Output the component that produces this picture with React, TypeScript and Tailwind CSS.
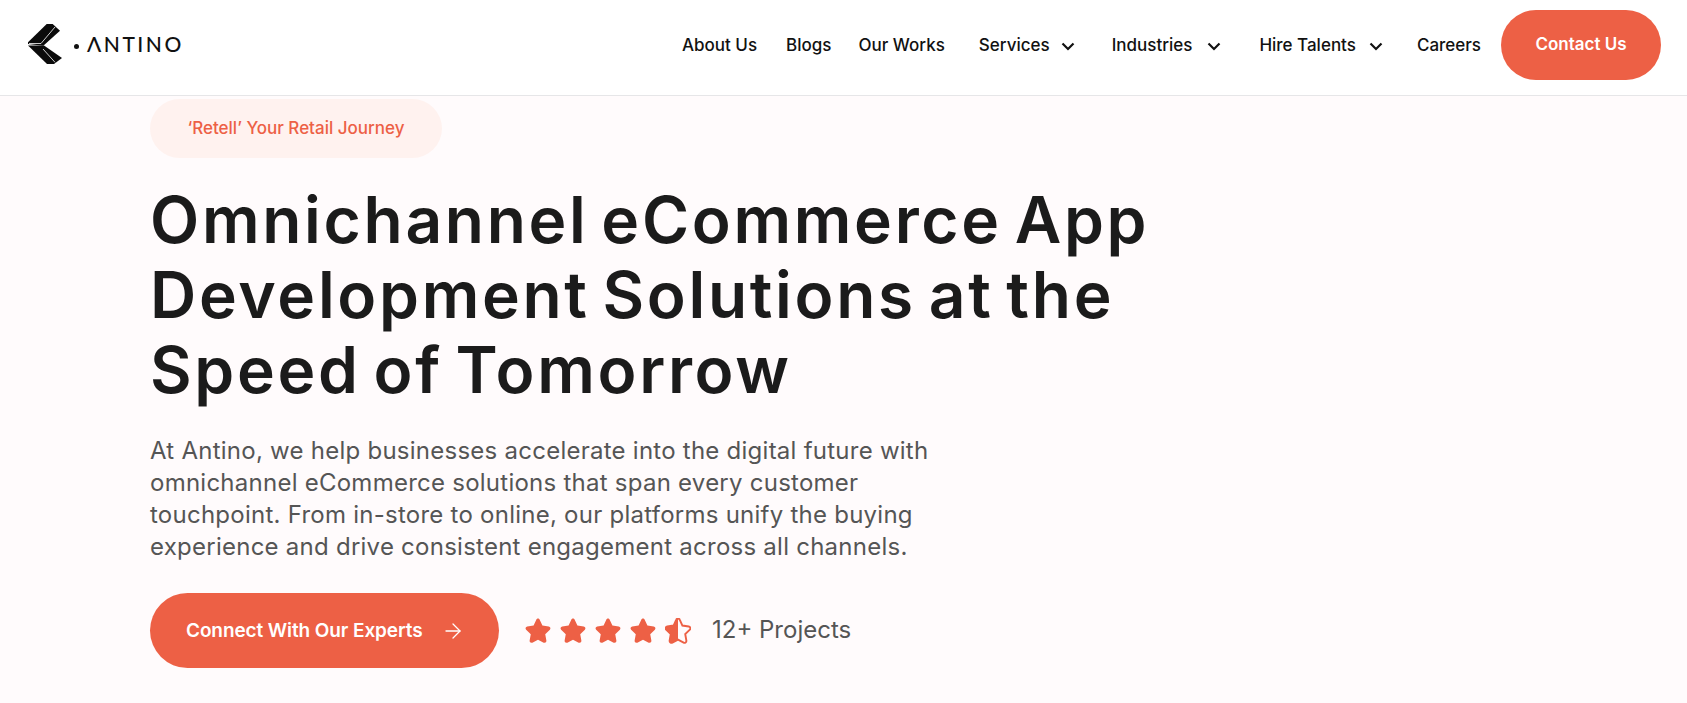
import React from "react";
import { ArrowRight } from "lucide-react";

const Star = ({ half = false }: { half?: boolean }) => (
  <svg width="26" height="26" viewBox="1 1 22 23" className="block">
    <path
      d="M12 1.500c.8 0 1.300.5 1.600 1.200l2.300 5 5.600.8c1.400.2 2 1.800 1 2.800l-4.100 4 1 5.700c.2 1.500-1.200 2.400-2.400 1.800L12 20.200l-5 2.600c-1.200.6-2.600-.3-2.400-1.800l1-5.700-4.100-4c-1-1-.4-2.600 1-2.800l5.600-.8 2.300-5c.3-.7.800-1.200 1.600-1.200z"
      fill={half ? "none" : "#ED6045"}
      stroke="#ED6045"
      strokeWidth={half ? 1.700 : 0}
    />
    {half && <path d="M12 1.500v18.700l-5 2.600c-1.200.6-2.600-.3-2.400-1.800l1-5.700-4.100-4c-1-1-.4-2.600 1-2.800l5.600-.8 2.300-5c.3-.7.800-1.200 1.600-1.200z" fill="#ED6045" />}
  </svg>
);

const Caret = ({ className }: { className: string }) => (
  <svg width="14" height="9" viewBox="0 0 14 9" className={className}>
    <path d="M1.500 1.500 L7 7 L12.500 1.500" fill="none" stroke="#111111" strokeWidth="2.200" />
  </svg>
);

const NavItem = ({ label, caret, className = "" }: { label: string; caret?: string; className?: string }) => (
  <a className={`mt-[3px] flex items-center text-[17px] font-medium text-[#111111] ${className}`}>
    {label}
    {caret && <Caret className={caret} />}
  </a>
);

export default function App() {
  return (
    <div className="min-h-[703px] bg-[#FFFBFC] font-['Inter',sans-serif]">
      <header className="flex h-[96px] items-center justify-between border-b border-[#E6E6E8] bg-white pb-[6px] pl-[28px] pr-[26px]">
        <div className="flex items-center">
          <svg width="35" height="41" viewBox="0 0 35 41">
            <polygon points="0,18.300 18.700,0 24.700,0 32,6.700 15.300,21.700 0,20" fill="#0b0b0b" />
            <polygon points="0,21.500 16,21.500 34,34 26,40 19,40" fill="#0b0b0b" />
            <path d="M1 19.500 L13 19.500 L27 3" stroke="#ffffff" strokeWidth="0.800" fill="none" />
            <path d="M15 25 L27 38.300" stroke="#ffffff" strokeWidth="0.800" fill="none" />
          </svg>
          <span className="ml-[11px] mt-[3px] h-[5px] w-[5px] rounded-full bg-[#111111]" />
          <span className="ml-[8px] -mt-[2px] font-['Lato',sans-serif] text-[21px] font-medium leading-none tracking-[0.12em] text-[#111111]">ΛNTINO</span>
        </div>
        <nav className="flex items-center">
          <NavItem label="About Us" />
          <NavItem label="Blogs" className="ml-[29px]" />
          <NavItem label="Our Works" className="ml-[27px]" />
          <NavItem label="Services" caret="ml-[11px]" className="ml-[34px]" />
          <NavItem label="Industries" caret="ml-[15px]" className="ml-[37px]" />
          <NavItem label="Hire Talents" caret="ml-[13px]" className="ml-[38px]" />
          <NavItem label="Careers" className="ml-[34px]" />
          <a className="ml-[20px] flex h-[70px] w-[160px] items-center justify-center rounded-full bg-[#ED6045] text-[17px] font-semibold text-white"><span className="mt-[1px]">Contact Us</span></a>
        </nav>
      </header>
      <main className="pl-[150px] pt-[3px]">
        <div className="flex h-[59px] w-[292px] items-center justify-center rounded-full bg-[#FFF2EF] text-[17px] font-medium text-[#ED6045]">‘Retell’ Your Retail Journey</div>
        <h1 className="mt-[24px] w-[1030px] text-[64px] font-semibold leading-[75px] tracking-[2.700px] text-[#1B1B1B] [word-spacing:-6px]">
          Omnichannel eCommerce App Development Solutions at the Speed of Tomorrow
        </h1>
        <p className="mt-[28px] w-[800px] text-[24px] leading-[32px] tracking-[0.25px] text-[#555555]">
          At Antino, we help businesses accelerate into the digital future with omnichannel eCommerce solutions that span every customer touchpoint. From in-store to online, our platforms unify the buying experience and drive consistent engagement across all channels.
        </p>
        <div className="mt-[30px] flex items-center">
          <a className="flex h-[75px] w-[349px] items-center rounded-full bg-[#ED6045] pl-[36px] text-[19px] font-semibold tracking-[-0.1px] text-white">
            <span className="mt-[2px]">Connect With Our Experts</span>
            <ArrowRight size={24} strokeWidth={1.300} className="ml-[18px]" />
          </a>
          <div className="ml-[26px] flex items-center gap-[9px]">
            <Star /><Star /><Star /><Star /><Star half />
          </div>
          <span className="-mt-[2px] ml-[21px] text-[24px] text-[#555555]">12+ Projects</span>
        </div>
      </main>
    </div>
  );
}
